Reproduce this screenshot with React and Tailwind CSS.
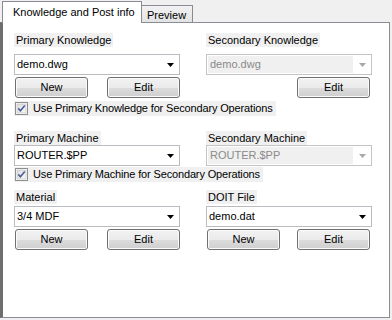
import React from "react";

const FONT = { fontFamily: '"Liberation Sans", Arial, sans-serif' };

/* ---------------- SMALL CONTROLS ---------------- */
const Label = ({ children }) => (
  <div className="flex h-[14px] items-start">
    <span className="block h-[14px] bg-[#f0f0f0] pl-[2px] pr-[2px] text-[11px] leading-[14px] text-black">
      {children}
    </span>
  </div>
);

const Arrow = ({ disabled }) => (
  <svg width="7" height="4" viewBox="0 0 7 4" className="shrink-0">
    <path d="M0 0H7L3.5 4Z" fill={disabled ? "#a8a8a8" : "#000"} />
  </svg>
);

const Combo = ({ value, disabled }) =>
  disabled ? (
    <div className="flex h-[21px] w-[166px] items-center border border-[#c2c4c6] bg-white">
      <div className="ml-[1px] flex h-[17px] w-[145px] items-center bg-[#f0f0f0] pl-[2px] text-[11px] text-[#8a8a8a]">
        {value}
      </div>
      <div className="flex flex-1 items-center justify-center">
        <Arrow disabled />
      </div>
    </div>
  ) : (
    <div className="flex h-[21px] w-[166px] items-center border border-[#b9bcc1] bg-white pl-[2px] pr-[5px]">
      <span className="flex-1 text-[11px] text-black">{value}</span>
      <Arrow />
    </div>
  );

const Button = ({ children }) => (
  <div className="flex h-[21px] w-[73px] items-center justify-center rounded-[3px] border border-[#707070] bg-[linear-gradient(to_bottom,#f2f2f2_0%,#ebebeb_50%,#dddddd_50%,#cfcfcf_100%)] text-[11px] text-black shadow-[inset_0_0_0_1px_#fbfbfb]">
    {children}
  </div>
);

const Check = ({ children }) => (
  <div className="flex h-[15px] w-fit items-center gap-[5px] bg-[#f0f0f0] pl-[1px] pr-[3px]">
    <svg width="13" height="13" viewBox="0 0 13 13" className="shrink-0">
      <defs>
        <linearGradient id="cb" x1="0" y1="0" x2="1" y2="1">
          <stop offset="0" stopColor="#dcdcdc" />
          <stop offset="1" stopColor="#fbfbfb" />
        </linearGradient>
      </defs>
      <rect x="0.5" y="0.5" width="12" height="12" fill="#fff" stroke="#8e8f8f" />
      <rect x="2" y="2" width="9" height="9" fill="url(#cb)" stroke="#b8b8b8" strokeWidth="0.6" />
      <path d="M3.3 6.4L5.4 8.8L9.8 3.4" fill="none" stroke="#4a5f97" strokeWidth="1.6" />
    </svg>
    <span className="text-[11px] leading-[15px] tracking-[-0.15px] text-black">{children}</span>
  </div>
);

/* ---------------- GROUPS ---------------- */
const Row = ({ children, className = "" }) => (
  <div className={"grid grid-cols-[166px_166px] gap-x-[26px] " + className}>{children}</div>
);

const Buttons = ({ showNew = true, right = false }) => (
  <div className={"flex h-[21px] justify-between pl-[1px] " + (right ? "pr-[2px]" : "")}>
    {showNew ? <Button>New</Button> : <span />}
    <Button>Edit</Button>
  </div>
);

/* ---------------- APP ---------------- */
const App = () => (
  <div className="h-[320px] w-[392px] overflow-hidden bg-[#f0f0f0]" style={FONT}>
    {/* tab strip */}
    <div className="flex h-[22px] items-end pl-[2px]">
      <div className="relative z-10 -mb-px h-[22px] w-[140px] border border-b-0 border-[#898c95] bg-white pl-[10px] pt-[4px] text-[11px] leading-[13px] text-black">
        Knowledge and Post info
      </div>
      <div className="h-[17px] border border-b-0 border-l-0 border-[#898c95] bg-[linear-gradient(to_bottom,#f2f2f2,#e3e3e3)] pl-[5px] pr-[6px] pt-[3px] text-[11px] leading-[12px] text-black">
        Preview
      </div>
    </div>

    {/* panel */}
    <div className="h-[296px] w-[390px] border border-l-[3px] border-[#898c95] border-l-[#6e6e6e] bg-white pl-[11px] pt-[10px]">
      <Row>
        <Label>Primary Knowledge</Label>
        <Label>Secondary Knowledge</Label>
      </Row>
      <Row className="mt-[7px]">
        <Combo value="demo.dwg" />
        <Combo value="demo.dwg" disabled />
      </Row>
      <Row className="mt-[2px]">
        <Buttons />
        <Buttons showNew={false} right />
      </Row>
      <div className="mt-[3px]">
        <Check>Use Primary Knowledge for Secondary Operations</Check>
      </div>

      <Row className="mt-[15px]">
        <Label>Primary Machine</Label>
        <Label>Secondary Machine</Label>
      </Row>
      <Row>
        <Combo value="ROUTER.$PP" />
        <Combo value="ROUTER.$PP" disabled />
      </Row>
      <div className="mt-[1px]">
        <Check>Use Primary Machine for Secondary Operations</Check>
      </div>

      <Row className="mt-[8px]">
        <Label>Material</Label>
        <Label>DOIT File</Label>
      </Row>
      <Row className="mt-[2px]">
        <Combo value="3/4 MDF" />
        <Combo value="demo.dat" />
      </Row>
      <Row className="mt-[2px]">
        <Buttons />
        <Buttons right />
      </Row>
    </div>
  </div>
);

export default App;
